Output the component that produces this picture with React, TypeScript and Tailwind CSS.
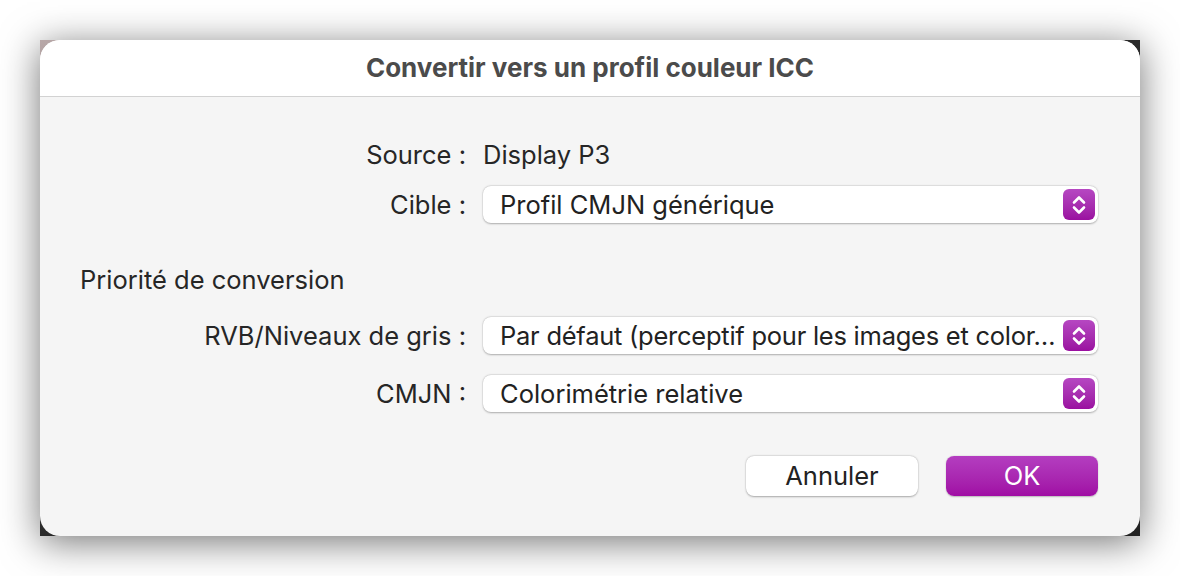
import React from 'react';

const font = { fontFamily: 'Inter, "Noto Sans", sans-serif' };

function Stepper() {
  return (
    <div className="absolute right-[3px] top-[3px] bottom-[3px] w-[32px] rounded-[6px] bg-gradient-to-b from-[#b647c2] to-[#9a0fa0] flex items-center justify-center">
      <svg width="18" height="24" viewBox="0 0 18 24" fill="none" stroke="white" strokeWidth="2.6" strokeLinecap="round" strokeLinejoin="round">
        <path d="M4 9.5 L9 4.5 L14 9.5" />
        <path d="M4 14.5 L9 19.5 L14 14.5" />
      </svg>
    </div>
  );
}

function Select({ value, tight }: { value: string; tight?: boolean }) {
  return (
    <div className="relative flex-1 min-w-0 h-[37px] bg-white rounded-[8px] shadow-[0_0.5px_2px_rgba(0,0,0,0.28),0_0_0_0.5px_rgba(0,0,0,0.06)] flex items-center pl-[17px] pr-[44px] overflow-hidden">
      <span className={'block min-w-0 whitespace-nowrap text-[25.5px] leading-[37px] text-[#222] ' + (tight ? 'tracking-[-0.25px]' : '')}>{value}</span>
      <Stepper />
    </div>
  );
}

function Row({ label, children, className }: { label: string; children: React.ReactNode; className?: string }) {
  return (
    <div className={'flex items-center h-[37px] ' + (className || '')}>
      <div className="w-[386px] shrink-0 text-right text-[25.5px] leading-[37px] text-[#262626] whitespace-nowrap">{label}</div>
      <div className="ml-[17px] flex-1 min-w-0 flex">{children}</div>
    </div>
  );
}

export default function App() {
  return (
    <div className="w-[1180px] h-[576px] bg-white pt-[40px] pl-[40px]" style={font}>
      <div className="w-[1100px] h-[496px] bg-gradient-to-br from-[#b8a8a8] via-[#2a2a2a] to-[#222] shadow-[0_6px_36px_rgba(0,0,0,0.55)]">
        <div className="w-full h-full rounded-[20px] overflow-hidden bg-[#f5f5f5] flex flex-col">
          <div className="h-[57px] shrink-0 bg-white border-b border-[#d2d2d2] flex items-center justify-center">
            <span className="text-[26px] font-bold text-[#4b4b4b] -mt-[2px]">Convertir vers un profil couleur ICC</span>
          </div>
          <div className="flex-1 pl-[40px] pr-[42px] pt-[39px]">
            <Row label="Source :">
              <span className="text-[25.5px] leading-[37px] text-[#262626]">Display P3</span>
            </Row>
            <Row label="Cible :" className="mt-[13px]">
              <Select value="Profil CMJN générique" />
            </Row>
            <div className="mt-[42px] text-[25.5px] text-[#262626] leading-[30px]">Priorité de conversion</div>
            <Row label="RVB/Niveaux de gris :" className="mt-[22px]">
              <Select value="Par défaut (perceptif pour les images et color…" tight />
            </Row>
            <Row label="CMJN :" className="mt-[21px]">
              <Select value="Colorimétrie relative" />
            </Row>
            <div className="mt-[44px] flex justify-end gap-[28px]">
              <button className="w-[172px] h-[40px] bg-white rounded-[8px] shadow-[0_0.5px_2px_rgba(0,0,0,0.3),0_0_0_0.5px_rgba(0,0,0,0.05)] text-[25.5px] text-[#222]">Annuler</button>
              <button className="w-[152px] h-[40px] rounded-[8px] bg-gradient-to-b from-[#b43dc0] to-[#a00ca4] text-[25.5px] text-white shadow-[0_0.5px_1.5px_rgba(0,0,0,0.25)]">OK</button>
            </div>
          </div>
        </div>
      </div>
    </div>
  );
}
